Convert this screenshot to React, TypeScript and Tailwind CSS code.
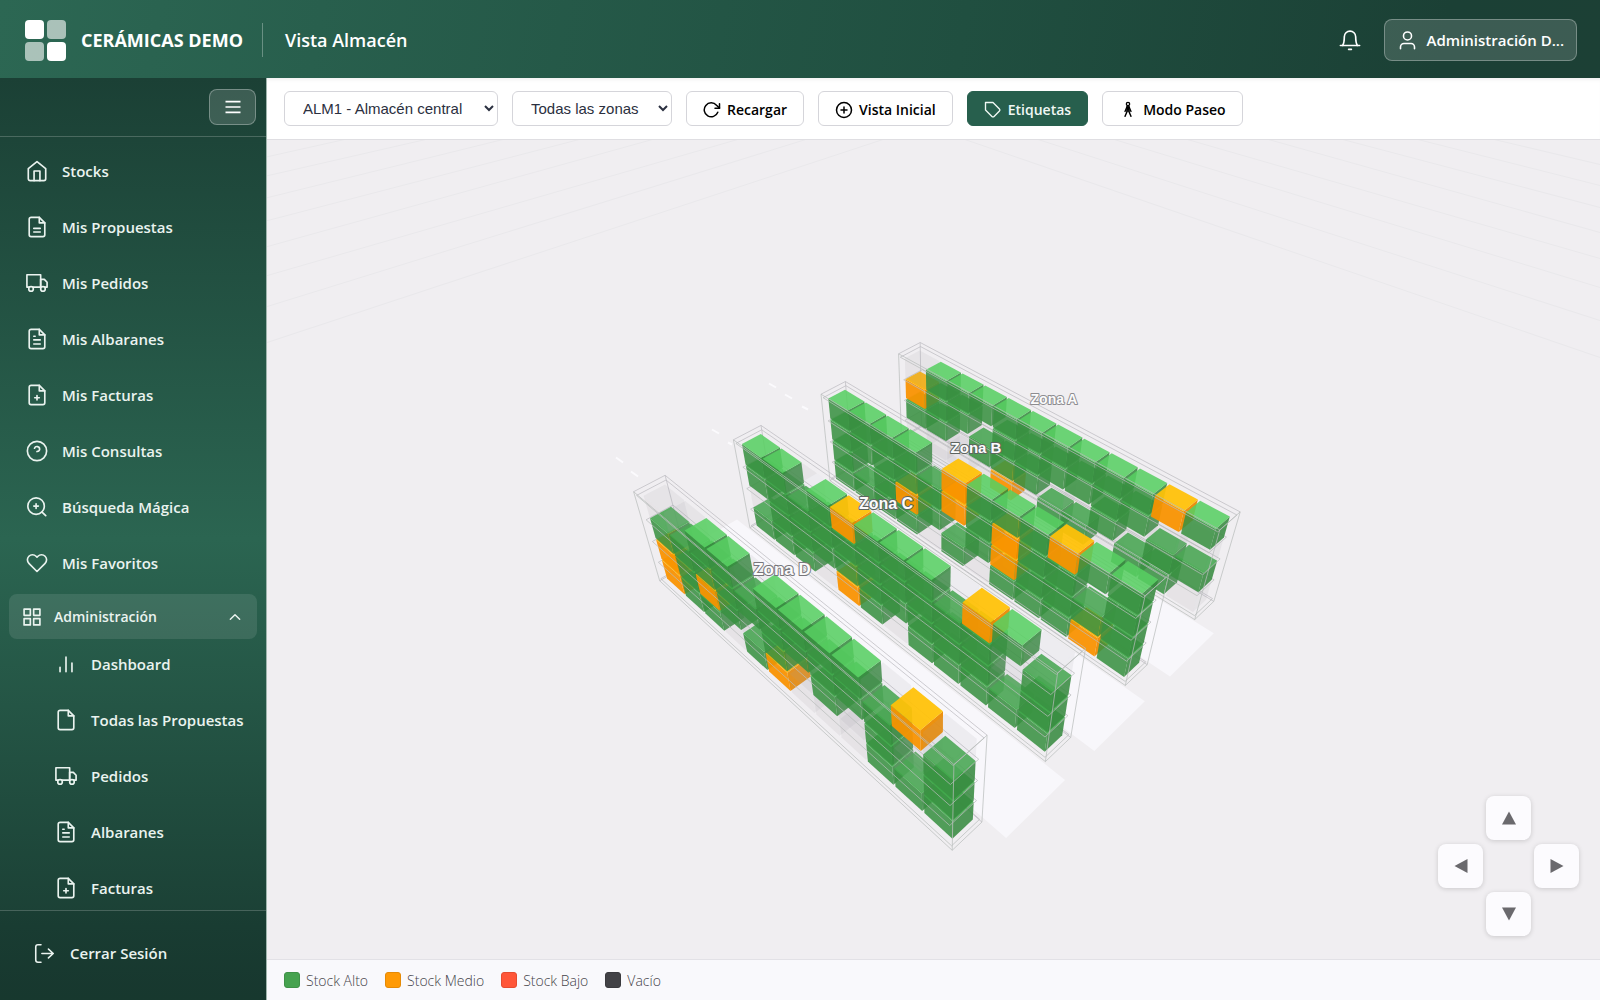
import React, { type ReactNode } from 'react';

type Point = [number, number];

/* ---------- icons ---------- */

function Icon({ children, className = 'size-[22px]', weight = 1.8 }: { children: ReactNode; className?: string; weight?: number }) {
  return (
    <svg
      viewBox="0 0 24 24"
      className={`${className} shrink-0`}
      fill="none"
      stroke="currentColor"
      strokeWidth={weight}
      strokeLinecap="round"
      strokeLinejoin="round"
      aria-hidden="true"
    >
      {children}
    </svg>
  );
}

const sheet = (
  <>
    <path d="M14.5 1.5H5.5a2 2 0 0 0-2 2v17a2 2 0 0 0 2 2h13a2 2 0 0 0 2-2v-13z" />
    <path d="M14.5 1.5v6h6" />
  </>
);

const glyphs = {
  home: (
    <>
      <path d="M2.5 9.5 12 1.8l9.500 7.700V20.500a2 2 0 0 1-2 2h-15a2 2 0 0 1-2-2z" />
      <path d="M8.800 22.500V12h6.400v10.500" />
    </>
  ),
  proposal: (
    <>
      {sheet}
      <path d="M8.500 13.500h7M8.500 17.500h7" />
    </>
  ),
  truck: (
    <>
      <path d="M1 3h15v13.500H1z" />
      <path d="M16 8h4l3 3.200v5.300h-7z" />
      <circle cx="5.500" cy="18.500" r="2.500" fill="#225242" />
      <circle cx="18.500" cy="18.500" r="2.500" fill="#225242" />
    </>
  ),
  note: (
    <>
      {sheet}
      <path d="M8.500 13h7M8.500 17.500h7M8.500 9h1.500" />
    </>
  ),
  invoice: (
    <>
      {sheet}
      <path d="M12 12.500v5M9.500 15h5" />
    </>
  ),
  help: (
    <>
      <circle cx="12" cy="12" r="10.500" />
      <path d="M9.300 9a2.900 2.900 0 0 1 5.600 1c0 1.900-2.900 2.600-2.900 2.600" />
    </>
  ),
  search: (
    <>
      <circle cx="11" cy="11" r="9" />
      <path d="m21.500 21.500-4-4M11 8.500v5M8.500 11h5" />
    </>
  ),
  heart: (
    <path d="M20.840 4.610a5.500 5.500 0 0 0-7.780 0L12 5.670l-1.060-1.060a5.500 5.500 0 0 0-7.780 7.780l1.060 1.060L12 21.230l7.780-7.780 1.060-1.060a5.500 5.500 0 0 0 0-7.780z" />
  ),
  grid: <path d="M2.500 2.500h7.500v7.500H2.500zM14 2.500h7.500v7.500H14zM14 14h7.500v7.500H14zM2.500 14h7.500v7.500H2.500z" />,
  chart: <path d="M5.500 20.500v-5M12 20.500v-16M18.500 20.500v-9.500" />,
  file: sheet,
  logout: (
    <>
      <path d="M8 22H4.500a2.500 2.500 0 0 1-2.500-2.500v-15A2.500 2.500 0 0 1 4.500 2H8" />
      <path d="m16.500 17 5.500-5-5.500-5M22 12H9" />
    </>
  ),
};

type GlyphName = keyof typeof glyphs;

/* ---------- warehouse scene ---------- */

const AISLE = 3.32;

function project(x: number, y: number, z: number): Point {
  const w = 1 - 0.19321 * x - 0.07065 * y - 0.01583 * z;
  return [
    (57.74606 * x - 66.32805 * y - 34.3289 * z + 921.51432) / w,
    (58.37276 * x - 108.40244 * y + 4.85841 * z + 427.20486) / w,
  ];
}

const poly = (pts: Point[]) => pts.map((p) => p.map((v) => v.toFixed(1)).join(',')).join(' ');

// Each rack: four levels from top to bottom, twelve bins each.
// g = high stock, o = medium stock, e = empty.
const racks = [
  ['egggggggggog', 'oggeggggggee', 'ggegggeegegg', 'eeeeoeggegge'],
  ['ggggeogggogg', 'gggggogoggeg'.slice(0, 12), 'gegogegogggg', 'ggggegegggog'],
  ['ggegogggeoge', 'ggggggggggeg', 'egggggggggeg', 'gggeogeggggg'],
  ['eeggeggggeoe', 'ggggggggggeg', 'ogogegegegeg', 'oggegoeeeggg'],
];

type Paint = { top: string; low: string; front: string; side: string; alpha: number; lowAlpha: number };

const paint: Record<string, Paint> = {
  g: { top: '#57cf62', low: '#3fa84a', front: '#3a9142', side: '#378a3f', alpha: 0.87, lowAlpha: 0.9 },
  o: { top: '#ffc107', low: '#fbb106', front: '#f99300', side: '#ec8a00', alpha: 0.94, lowAlpha: 0.94 },
  e: { top: '#a4a2a8', low: '#a4a2a8', front: '#a09ea5', side: '#a3a1a8', alpha: 0.13, lowAlpha: 0.13 },
};

function Bin({ kind, col, level, rack }: { kind: string; col: number; level: number; rack: number }) {
  const pitch = 0.082;
  const x0 = 0.006 + col * pitch;
  const x1 = x0 + pitch * 0.925;
  const y0 = level * 0.238;
  const y1 = y0 + 0.22;
  const z0 = rack * AISLE + 0.1;
  const z1 = rack * AISLE + 0.79;
  const c = paint[kind];
  const front: Point[] = [project(x0, y0, z1), project(x1, y0, z1), project(x1, y1, z1), project(x0, y1, z1)];
  const side: Point[] = [project(x1, y0, z1), project(x1, y0, z0), project(x1, y1, z0), project(x1, y1, z1)];
  const top: Point[] = [project(x0, y1, z1), project(x1, y1, z1), project(x1, y1, z0), project(x0, y1, z0)];
  return (
    <g fillOpacity={c.alpha}>
      <polygon points={poly(side)} fill={c.side} />
      <polygon points={poly(front)} fill={c.front} />
      <polygon points={poly(top)} fill={level === 3 ? c.top : c.low} fillOpacity={level === 3 ? c.alpha : c.lowAlpha} />
    </g>
  );
}

const rings = [
  { y: 1, inX: 0, inZ: 0 },
  { y: 0.965, inX: 0.004, inZ: 0.03 },
  { y: 0.72, inX: 0.012, inZ: 0.06 },
  { y: 0.48, inX: 0.012, inZ: 0.06 },
  { y: 0.24, inX: 0.012, inZ: 0.06 },
  { y: 0.03, inX: 0.004, inZ: 0.03 },
  { y: 0, inX: 0, inZ: 0 },
];

// Rails and posts at the far side of the rack, drawn behind the bins.
function FrameBack({ rack }: { rack: number }) {
  const z = rack * AISLE;
  return (
    <g fill="none" stroke="#bdbcc1" strokeOpacity={0.75} strokeWidth={1}>
      {rings.map(({ y, inX, inZ }) => (
        <polyline key={y} points={poly([project(inX, y, z + 1 - inZ), project(inX, y, z + inZ), project(1 - inX, y, z + inZ)])} />
      ))}
      <polyline points={poly([project(0, 0, z), project(0, 1, z)])} />
    </g>
  );
}

// Rails and posts that face the camera, drawn over the bins.
function FrameFront({ rack }: { rack: number }) {
  const z = rack * AISLE;
  const posts: Point[] = [[0, 1], [1, 1], [1, 0]];
  return (
    <g fill="none" stroke="#b9bcbb" strokeOpacity={0.72} strokeWidth={1}>
      {rings.map(({ y, inX, inZ }) => (
        <polyline
          key={y}
          points={poly([project(inX, y, z + 1 - inZ), project(1 - inX, y, z + 1 - inZ), project(1 - inX, y, z + inZ)])}
        />
      ))}
      {posts.map(([x, dz]) => (
        <polyline key={`${x}-${dz}`} points={poly([project(x, 0, z + dz), project(x, 1, z + dz)])} />
      ))}
    </g>
  );
}

const floorLines = [
  [264, 158, 349, 139], [264, 177, 430, 139], [264, 199, 507, 139], [264, 222, 583, 139],
  [264, 248, 656, 139], [264, 277, 741, 139], [264, 308, 809, 139], [264, 344, 886, 139],
  [962, 139, 1600, 358], [1035, 139, 1600, 321], [1111, 139, 1600, 288], [1184, 139, 1600, 259],
  [1265, 139, 1600, 233], [1339, 139, 1600, 208], [1414, 139, 1600, 186], [1490, 139, 1600, 165],
];

const dashes = [
  [769, 384, 776, 388], [785, 395, 792, 399], [802, 407, 808, 410],
  [712, 430, 719, 434], [728, 443, 732, 445], [616, 458, 623, 463], [631, 472, 638, 477],
];

const zoneLabels = [
  { text: 'Zona A', x: 1054, y: 404, size: 14, stroke: '#8d8c90' },
  { text: 'Zona B', x: 976, y: 453, size: 15, stroke: '#5d6560' },
  { text: 'Zona C', x: 886, y: 509, size: 16, stroke: '#5d6560' },
  { text: 'Zona D', x: 782, y: 575, size: 17, stroke: '#77767b' },
];

function Warehouse() {
  return (
    <svg
      viewBox="267 140 1333 820"
      preserveAspectRatio="xMidYMid slice"
      className="block size-full"
      role="img"
      aria-label="Vista 3D del almacén"
    >
      <g stroke="#e9e8eb" strokeWidth={1}>
        {floorLines.map(([a, b, c, d]) => (
          <line key={`${a}-${b}-${d}`} x1={a} y1={b} x2={c} y2={d} />
        ))}
      </g>
      <g stroke="#fbfafd" strokeWidth={2}>
        {dashes.map(([a, b, c, d]) => (
          <line key={`${a}-${b}`} x1={a} y1={b} x2={c} y2={d} />
        ))}
      </g>
      {[0, 1, 2].map((k) => {
        const near = (k + 1) * AISLE - 0.1;
        const far = k * AISLE + 1.06;
        return (
          <polygon
            key={k}
            fill="#f8f7fb"
            points={poly([project(-0.05, 0, far), project(1.055, 0, far), project(1.055, 0, near), project(-0.05, 0, near)])}
          />
        );
      })}
      {racks.map((rows, rack) => (
        <g key={rack}>
          <FrameBack rack={rack} />
          {Array.from({ length: 12 }, (_, col) =>
            [3, 2, 1, 0].map((row) => <Bin key={`${col}-${row}`} kind={rows[row][col]} col={col} level={3 - row} rack={rack} />),
          )}
          <FrameFront rack={rack} />
        </g>
      ))}
      {zoneLabels.map((l) => (
        <text
          key={l.text}
          x={l.x}
          y={l.y}
          fontSize={l.size}
          textAnchor="middle"
          fill="#fbfbfc"
          stroke={l.stroke}
          strokeWidth={2}
          strokeLinejoin="round"
          paintOrder="stroke"
          className="font-['Liberation_Sans',sans-serif] font-bold"
        >
          {l.text}
        </text>
      ))}
    </svg>
  );
}

/* ---------- navigation ---------- */

const mainLinks: { label: string; icon: GlyphName }[] = [
  { label: 'Stocks', icon: 'home' },
  { label: 'Mis Propuestas', icon: 'proposal' },
  { label: 'Mis Pedidos', icon: 'truck' },
  { label: 'Mis Albaranes', icon: 'note' },
  { label: 'Mis Facturas', icon: 'invoice' },
  { label: 'Mis Consultas', icon: 'help' },
  { label: 'Búsqueda Mágica', icon: 'search' },
  { label: 'Mis Favoritos', icon: 'heart' },
];

const adminLinks: { label: string; icon: GlyphName }[] = [
  { label: 'Dashboard', icon: 'chart' },
  { label: 'Todas las Propuestas', icon: 'file' },
  { label: 'Pedidos', icon: 'truck' },
  { label: 'Albaranes', icon: 'note' },
  { label: 'Facturas', icon: 'invoice' },
];

function Sidebar() {
  return (
    <aside className="flex w-[267px] shrink-0 flex-col border-r border-[#9fb5ad] bg-[linear-gradient(180deg,#1b4035_0%,#2b6551_50%,#1b4035_92%,#193b31_100%)] text-[15px] font-semibold text-[#eaf3ef]">
      <div className="flex h-[59px] shrink-0 items-start justify-end border-b border-white/20 pt-[11px] pr-[10px]">
        <button
          type="button"
          aria-label="Contraer menú"
          className="flex h-9 w-[47px] items-center justify-center rounded-lg border border-white/30 bg-white/15 text-white"
        >
          <Icon className="size-5" weight={2}>
            <path d="M3 5.500h18M3 12h18M3 18.500h18" strokeLinecap="butt" />
          </Icon>
        </button>
      </div>
      <nav className="flex min-h-0 flex-1 flex-col overflow-hidden pt-[6px]">
        {mainLinks.map((l) => (
          <a key={l.label} href="#" className="flex h-14 shrink-0 items-center gap-[14px] pl-[26px]">
            <Icon>{glyphs[l.icon]}</Icon>
            {l.label}
          </a>
        ))}
        <button
          type="button"
          aria-expanded="true"
          className="mx-[9px] mt-[3px] flex h-[45px] shrink-0 items-center gap-3 rounded-lg bg-white/10 pr-[14px] pl-[13px] text-left text-[14px] font-semibold"
        >
          <Icon className="size-5" weight={2}>{glyphs.grid}</Icon>
          <span className="flex-1">Administración</span>
          <Icon className="size-4" weight={2.2}><path d="m5 15.500 7-7 7 7" /></Icon>
        </button>
        <div className="-mt-[3px] flex flex-col">
          {adminLinks.map((l) => (
            <a key={l.label} href="#" className="flex h-14 shrink-0 items-center gap-[14px] pl-[55px]">
              <Icon>{glyphs[l.icon]}</Icon>
              {l.label}
            </a>
          ))}
        </div>
      </nav>
      <div className="flex h-[90px] shrink-0 items-center border-t border-white/20 bg-black/5 pb-1 pl-[34px]">
        <a href="#" className="flex items-center gap-[15px]">
          <Icon className="size-[21px]">{glyphs.logout}</Icon>
          Cerrar Sesión
        </a>
      </div>
    </aside>
  );
}

/* ---------- toolbar ---------- */

const toolButton = "flex h-[35px] items-center gap-[6px] rounded-md border px-4 pt-[2px] text-[14px] font-semibold whitespace-nowrap";
const toolSelect = "h-[35px] rounded-md border border-[#d5d5da] bg-white pl-[14px] font-['Liberation_Sans',sans-serif] text-[15px] text-[#2b3040]";

function Toolbar() {
  return (
    <div className="flex h-[62px] shrink-0 items-center gap-[14px] border-b border-[#dfdee2] bg-white px-[17px] shadow-[inset_0_4px_4px_-3px_rgba(0,0,0,0.08)]">
      <select aria-label="Almacén" className={`${toolSelect} w-[214px]`}>
        <option>ALM1 - Almacén central</option>
      </select>
      <select aria-label="Zona" className={`${toolSelect} w-[160px]`}>
        <option>Todas las zonas</option>
      </select>
      <button type="button" className={`${toolButton} border-[#d5d5da] bg-white text-black`}>
        <Icon className="size-[18px]" weight={2}>
          <path d="M22 3.500v6h-6" />
          <path d="M19.700 15A9.300 9.300 0 1 1 18 5.700l4 3.800" />
        </Icon>
        Recargar
      </button>
      <button type="button" className={`${toolButton} border-[#d5d5da] bg-white text-black`}>
        <Icon className="size-[18px]" weight={2}>
          <circle cx="12" cy="12" r="10" />
          <path d="M12 8v8M8 12h8" />
        </Icon>
        Vista Inicial
      </button>
      <button type="button" aria-pressed="true" className={`${toolButton} border-[#275f4d] bg-[#275f4d] text-[#f0f8f4]`}>
        <Icon className="size-[18px]" weight={1.8}>
          <path d="M20.590 13.410l-7.170 7.170a2 2 0 0 1-2.830 0L2 12V2h10l8.590 8.590a2 2 0 0 1 0 2.820z" />
        </Icon>
        Etiquetas
      </button>
      <button type="button" className={`${toolButton} border-[#d5d5da] bg-white text-black`}>
        <Icon className="size-[18px]" weight={1.8}>
          <circle cx="12" cy="4" r="2.200" />
          <path d="M12 7v5M10.500 7.500v6M13.500 7.500v6" />
          <path d="m10.500 8-2.500 6M13.500 8l2.500 6M11 13.500 8 20.500M13 13.500l3 7" />
        </Icon>
        Modo Paseo
      </button>
    </div>
  );
}

/* ---------- camera pad ---------- */

function PadButton({ label, path, place }: { label: string; path: string; place: string }) {
  return (
    <button
      type="button"
      aria-label={label}
      className={`${place} flex h-11 w-[45px] items-center justify-center rounded-lg bg-[#fcfbfe] text-[#6a696d] shadow-[0_1px_5px_rgba(0,0,0,0.16)]`}
    >
      <svg viewBox="0 0 14 14" className="size-[14px]" fill="currentColor" aria-hidden="true">
        <path d={path} />
      </svg>
    </button>
  );
}

const legend = [
  { label: 'Stock Alto', swatch: 'border-[#3f9147] bg-[#46a24f]' },
  { label: 'Stock Medio', swatch: 'border-[#e58a06] bg-[#ff9a05]' },
  { label: 'Stock Bajo', swatch: 'border-[#e54c30] bg-[#ff5638]' },
  { label: 'Vacío', swatch: 'border-[#3a3a3e] bg-[#424246]' },
];

export default function App() {
  return (
    <div className="flex h-screen flex-col overflow-hidden bg-[#f0eef1] font-['Open_Sans','Noto_Sans',sans-serif]">
      <header className="flex h-[78px] shrink-0 items-center bg-[linear-gradient(100deg,#2c6753_0%,#285f4d_20%,#204f40_60%,#1b4035_90%,#1c4035_100%)] pt-[2px] pr-[23px] pl-[25px] text-white">
        <div className="grid size-[41px] grid-cols-2 gap-[3px]" aria-hidden="true">
          <span className="rounded bg-white" />
          <span className="rounded bg-white/60" />
          <span className="rounded bg-white/60" />
          <span className="rounded bg-white" />
        </div>
        <span className="ml-[15px] text-[18px] font-bold">CERÁMICAS DEMO</span>
        <span className="ml-[19px] h-[34px] w-px bg-white/30" />
        <h1 className="ml-[22px] text-[18px] font-semibold">Vista Almacén</h1>
        <button type="button" aria-label="Notificaciones" className="ml-auto flex size-[46px] items-center justify-center">
          <Icon>
            <path d="M1.500 18h21" />
            <path d="M4 18c1.500-2.500 1.800-5 1.800-9.500a6.200 6.200 0 0 1 12.400 0c0 4.500.3 7 1.800 9.500" />
            <path d="M10.500 22.300h3" />
          </Icon>
        </button>
        <button
          type="button"
          className="ml-[11px] flex h-[42px] items-center gap-[9px] rounded-lg border border-white/30 bg-white/15 px-3 text-[15px] font-semibold"
        >
          <Icon className="size-[21px]">
            <path d="M20 21.500v-2a4 4 0 0 0-4-4H8a4 4 0 0 0-4 4v2" />
            <circle cx="12" cy="6.800" r="4.600" />
          </Icon>
          Administración D...
        </button>
      </header>
      <div className="flex min-h-0 flex-1">
        <Sidebar />
        <main className="flex min-w-0 flex-1 flex-col">
          <Toolbar />
          <div className="relative min-h-0 flex-1">
            <Warehouse />
            <div className="absolute right-[21px] bottom-[23px] grid grid-cols-3 gap-x-[3px] gap-y-1">
              <PadButton label="Arriba" place="col-start-2" path="M7 .5 14 13.500H0z" />
              <PadButton label="Izquierda" place="col-start-1 row-start-2" path="M.5 7 13.500 0v14z" />
              <PadButton label="Derecha" place="col-start-3 row-start-2" path="M13.500 7 .5 0v14z" />
              <PadButton label="Abajo" place="col-start-2 row-start-3" path="M7 13.500 14 .5H0z" />
            </div>
          </div>
          <footer className="flex h-[41px] shrink-0 items-center gap-[17px] border-t border-[#e2e1e6] bg-[#f9f9fc] px-[17px] text-[14px] font-light text-[#444348]">
            {legend.map((l) => (
              <span key={l.label} className="flex items-center gap-[6px]">
                <span className={`size-4 rounded-[3px] border ${l.swatch}`} />
                {l.label}
              </span>
            ))}
          </footer>
        </main>
      </div>
    </div>
  );
}
